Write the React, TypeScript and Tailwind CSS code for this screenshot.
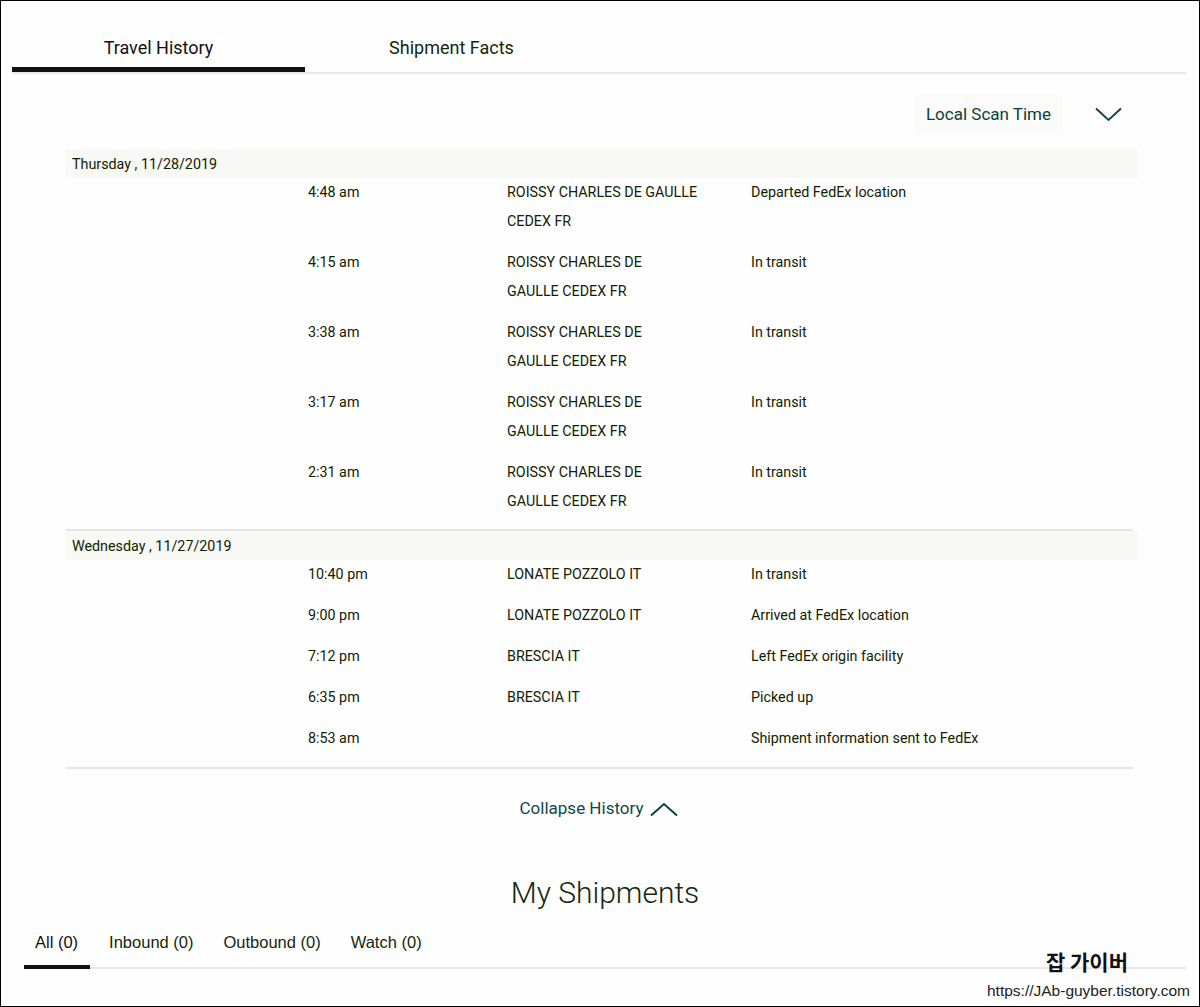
import React from 'react';

type Scan = { time: string; loc: string[]; status: string };

const thursday: Scan[] = [
  { time: '4:48 am', loc: ['ROISSY CHARLES DE GAULLE', 'CEDEX FR'], status: 'Departed FedEx location' },
  { time: '4:15 am', loc: ['ROISSY CHARLES DE', 'GAULLE CEDEX FR'], status: 'In transit' },
  { time: '3:38 am', loc: ['ROISSY CHARLES DE', 'GAULLE CEDEX FR'], status: 'In transit' },
  { time: '3:17 am', loc: ['ROISSY CHARLES DE', 'GAULLE CEDEX FR'], status: 'In transit' },
  { time: '2:31 am', loc: ['ROISSY CHARLES DE', 'GAULLE CEDEX FR'], status: 'In transit' },
];

const wednesday: Scan[] = [
  { time: '10:40 pm', loc: ['LONATE POZZOLO IT'], status: 'In transit' },
  { time: '9:00 pm', loc: ['LONATE POZZOLO IT'], status: 'Arrived at FedEx location' },
  { time: '7:12 pm', loc: ['BRESCIA IT'], status: 'Left FedEx origin facility' },
  { time: '6:35 pm', loc: ['BRESCIA IT'], status: 'Picked up' },
  { time: '8:53 am', loc: [], status: 'Shipment information sent to FedEx' },
];

function DayGroup({ date, scans }: { date: string; scans: Scan[] }) {
  return (
    <div>
      <div className="h-[29px] bg-[#f8f8f5] pl-[6px] text-[14.3px] leading-[30px] text-[#112200]">{date}</div>
      {scans.map((s, i) => (
        <div key={i} className="flex pb-[12px] text-[14.3px] leading-[29px] text-[#112200]">
          <div className="w-[242px] shrink-0" />
          <div className="w-[199px] shrink-0">{s.time}</div>
          <div className="w-[244px] shrink-0">
            {s.loc.map((l, j) => (
              <div key={j}>{l}</div>
            ))}
          </div>
          <div>{s.status}</div>
        </div>
      ))}
    </div>
  );
}

export default function App() {
  return (
    <div className="relative h-[1007px] w-[1200px] overflow-hidden border border-black bg-[#fefefe] font-['Roboto',sans-serif]">
      {/* top tabs */}
      <div className="ml-[11px] flex w-[1174px] border-b-[2px] border-[#e8e8e4]">
        <div className="w-[293px] border-b-[5px] border-[#111111] pt-[35px] pb-[7px] text-center text-[18px] leading-6 text-[#111111]">
          Travel History
        </div>
        <div className="w-[293px] pt-[35px] pb-[12px] text-center text-[18px] leading-6 text-[#14280a]">
          Shipment Facts
        </div>
      </div>

      <div className="ml-[65px] w-[1072px]">
        {/* scan time selector */}
        <div className="mt-[20px] mb-[15px] flex h-[40px] items-center justify-end pr-[16px]">
          <div className="bg-[#fbfbf9] px-[12px] text-[17px] leading-[40px] text-[#0c3f38]">Local Scan Time</div>
          <svg width="27" height="15" viewBox="0 0 27 15" className="ml-[32px]">
            <polyline points="1,1.5 13.5,13 26,1.5" fill="none" stroke="#0e4a47" strokeWidth="2" />
          </svg>
        </div>

        <DayGroup date="Thursday , 11/28/2019" scans={thursday} />
        <div className="mt-[1px] h-[2px] w-[1067px] bg-[#e4e4e0]" />
        <DayGroup date="Wednesday , 11/27/2019" scans={wednesday} />
        <div className="mt-[2px] h-[2px] w-[1067px] bg-[#e4e4e0]" />
      </div>

      {/* collapse */}
      <div className="mt-[27px] flex items-center justify-center pr-[2px]">
        <span className="text-[17px] leading-6 text-[#0c4a48]">Collapse History</span>
        <svg width="28" height="15" viewBox="0 0 28 15" className="ml-[7px] mt-[2px]">
          <polyline points="1,13.5 14,2 27,13.5" fill="none" stroke="#0c3f38" strokeWidth="2" />
        </svg>
      </div>

      <div className="mt-[53px] pl-[10px] text-center text-[30px] font-light leading-[40px] text-[#14280a]">My Shipments</div>

      {/* shipment tabs */}
      <div className="ml-[23px] mt-[19px] flex w-[1162px] gap-[8px] border-b-[2px] border-[#e8e8e4] font-['Liberation_Sans',Arial,sans-serif] text-[16.5px] leading-5">
        <div className="-mb-[2px] border-b-[4px] border-[#111111] pl-[11px] pr-[12px] pb-[13px] text-[#111111]">All (0)</div>
        <div className="px-[11px] pb-[13px] text-[#14280a]">Inbound (0)</div>
        <div className="px-[11px] pb-[13px] text-[#14280a]">Outbound (0)</div>
        <div className="px-[11px] pb-[13px] text-[#14280a]">Watch (0)</div>
      </div>

      {/* watermark */}
      <div className="absolute right-[9px] bottom-[5px] flex flex-col items-end">
        <div className="mr-[62px] font-['Noto_Sans_CJK_KR',sans-serif] text-[21px] font-bold leading-6 text-[#111111]">잡 가이버</div>
        <div className="mt-[8px] font-['Liberation_Sans',Arial,sans-serif] text-[15.5px] leading-5 text-[#222222]">https://JAb-guyber.tistory.com</div>
      </div>
    </div>
  );
}
